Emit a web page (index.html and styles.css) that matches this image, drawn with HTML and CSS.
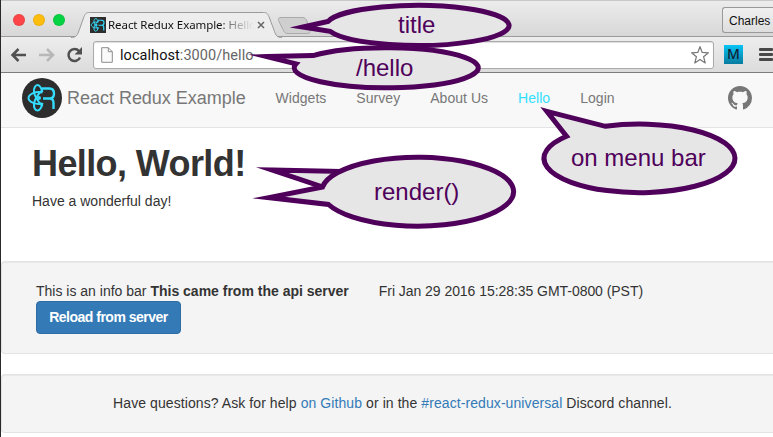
FILE: index.html
```html
<!DOCTYPE html>
<html lang="en">
<head>
<meta charset="utf-8">
<title>React Redux Example: Hello</title>
<link rel="stylesheet" href="styles.css">
</head>
<body>
<svg class="defs" width="0" height="0">
  <symbol id="mark" viewBox="0 0 40 40">
    <g fill="none" stroke="#35dcff" stroke-width="2">
      <path d="M20.500 14C19 9 17.500 7 15.500 7s-4 3-3.500 7 3.500 9 8.500 14"/>
      <path d="M20.500 14.500C13 13 6.500 16.500 6.500 20s6.500 7 14 5.500"/>
      <path d="M20.500 12C15 17 12.500 22 12 26s1.500 6.500 3.500 6.500 4-3 5-7.500"/>
      <path d="M20 10.500h7.500q4.500 0 4.500 5t-4.500 5H21M27.500 20.500q4 0 4 4.500v6" stroke-width="2.400"/>
    </g>
    <circle cx="17" cy="20" r="2" fill="#35dcff"/>
  </symbol>
</svg>
<div class="window">
  <div class="tabstrip">
    <div class="lights"><i class="red"></i><i class="amber"></i><i class="green"></i></div>
    <svg class="tab-shape" width="240" height="26" viewBox="0 0 240 26">
      <path d="M0 25.500c5 0 6-2 7.500-5.500L12.500 6c1.500-4 2.500-5.500 6-5.500h174c3.500 0 4.500 1.500 6 5.500l5 13.500c1.500 4 2.500 6 7.500 6" fill="#ededed" stroke="#9b9b9b"/>
      <path d="M210 5.500h21c3 0 4 1.500 5 4l3 8c1 3 0 4-3 4h-19c-3 0-4-1.500-5-4l-4-8c-1-3-1-4 2-4z" fill="#cfcfcf" stroke="#aaa"/>
    </svg>
    <div class="tab">
      <svg class="favicon" viewBox="0 0 40 40"><path d="M0 0h40v40H0z" fill="#2d2d2d"/><use href="#mark" transform="translate(-5 -5) scale(1.250)"/></svg>
      <span class="tab-title">React Redux Example: Hello</span>
      <svg class="close" width="8" height="8" viewBox="0 0 8 8"><path d="M1 1l6 6M7 1L1 7" stroke="#666" stroke-width="1.500"/></svg>
    </div>
    <div class="profile">Charles</div>
  </div>
  <div class="toolbar">
    <svg class="tools" width="84" height="24" viewBox="0 0 84 24" fill="none" stroke-width="2.500">
      <path d="M25 12H12M17.500 6l-6 6 6 6" stroke="#505050"/>
      <path d="M38 12h13M46 6l6 6-6 6" stroke="#b8b8b8"/>
      <path d="M78 8A6 6 0 1 0 79 14.500" stroke="#505050"/>
      <path d="M81 4v7.500h-7.500z" fill="#505050"/>
    </svg>
    <div class="url">
      <svg width="12" height="16" viewBox="0 0 12 16"><path d="M.7.700h6.600l4 4v10.600H.7zM7.300.700v4h4" fill="#fafafa" stroke="#8c8c8c"/></svg>
      <span class="address">localhost<span>:3000/hello</span></span>
      <svg class="star" width="20" height="20" viewBox="0 0 18 18"><path d="M9 1.500l2 5.200 5.600.3-4.400 3.500 1.500 5.600L9 13l-4.700 3.100 1.500-5.600L1.400 7 7 6.700z" fill="#fff" stroke="#777" stroke-width="1.100" stroke-linejoin="round"/></svg>
    </div>
    <div class="ext">M</div>
    <div class="menu"><i></i><i></i><i></i></div>
  </div>
  <nav class="navbar">
    <svg class="logo" width="40" height="40" viewBox="0 0 40 40"><circle cx="20" cy="20" r="20" fill="#2d2d2d"/><use href="#mark"/></svg>
    <span class="brand">React Redux Example</span>
    <div class="links">
      <a>Widgets</a><a>Survey</a><a>About Us</a><a class="active">Hello</a><a>Login</a>
    </div>
    <svg class="github" width="24" height="24" viewBox="0 0 16 16"><path fill="#777" d="M8 0C3.580 0 0 3.580 0 8c0 3.540 2.290 6.530 5.470 7.590.4.070.55-.17.55-.38 0-.19-.01-.82-.01-1.490-2.010.37-2.530-.49-2.690-.94-.09-.23-.48-.94-.82-1.130-.28-.15-.68-.52-.01-.53.63-.01 1.080.58 1.230.82.72 1.210 1.870.87 2.330.66.07-.52.28-.87.51-1.070-1.780-.2-3.640-.89-3.640-3.950 0-.87.31-1.590.82-2.150-.08-.2-.36-1.020.08-2.120 0 0 .67-.21 2.200.82.64-.18 1.320-.27 2-.27s1.360.09 2 .27c1.530-1.040 2.200-.82 2.200-.82.44 1.100.16 1.920.08 2.120.51.56.82 1.270.82 2.150 0 3.070-1.870 3.750-3.650 3.950.29.25.54.73.54 1.480 0 1.070-.01 1.930-.01 2.200 0 .21.15.46.55.38A8.010 8.010 0 0 0 16 8c0-4.420-3.580-8-8-8z"/></svg>
  </nav>
  <main class="hero">
    <h1>Hello, World!</h1>
    <p>Have a wonderful day!</p>
  </main>
  <section class="well info">
    <div class="info-line"><span>This is an info bar <strong>This came from the api server</strong></span><span class="date">Fri Jan 29 2016 15:28:35 GMT-0800 (PST)</span></div>
    <button class="reload">Reload from server</button>
  </section>
  <footer class="well foot">Have questions? Ask for help <a>on Github</a> or in the <a>#react-redux-universal</a> Discord channel.</footer>
</div>
<svg class="callouts" width="773" height="437" viewBox="0 0 773 437">
  <g fill="#e6e6e6" stroke="#4f005a" stroke-width="5" stroke-miterlimit="20">
    <path d="M303 27L328 21.400A91.500 20 0 1 1 330 31.300Z"/>
    <path d="M267 56.600L313 55.600A92 20 0 1 1 296 63.800Z"/>
    <path d="M272.300 170.100L345 171.500L323 187Z"/>
    <path d="M268.700 197.600L322.500 187A96 34.500 0 1 1 328.500 204.500Z"/>
    <path d="M546.800 111.300L605.300 126.300A95.500 34.300 0 1 1 566.500 136.200Z"/>
  </g>
  <g class="callout-text">
    <text x="398" y="33">title</text>
    <text x="356" y="76">/hello</text>
    <text x="374" y="200">render()</text>
    <text x="571" y="166">on menu bar</text>
  </g>
</svg>
</body>
</html>
```
FILE: styles.css
```css
* { box-sizing: border-box; }
body {
  margin: 0;
  height: 437px;
  overflow: hidden;
  position: relative;
  background: #fff;
  color: #333;
  font: 14px/20px "Liberation Sans", Arial, sans-serif;
}
.defs { position: absolute; }
.window { height: 437px; border-left: 1px solid #29292c; }
.tabstrip {
  height: 37px;
  display: flex;
  position: relative;
  background: linear-gradient(#ececec, #d7d7d7);
  border-top: 1px solid #c8c8c8;
  border-bottom: 1px solid #9b9b9b;
}
.lights { display: flex; gap: 8px; padding: 13px 0 0 12px; width: 88px; flex: none; }
.lights i { width: 12px; height: 12px; border-radius: 50%; border: 1px solid #0001; }
.red { background: #fc4548; }
.amber { background: #fdbd0e; }
.green { background: #06d343; }
.tab-shape { position: absolute; left: 70px; top: 11px; }
.tab { position: relative; display: flex; align-items: center; height: 24px; margin-top: 12px; width: 180px; }
.favicon { width: 16px; height: 16px; flex: none; margin-left: 1px; }
.tab-title {
  width: 148px;
  margin-left: 2px;
  overflow: hidden;
  white-space: nowrap;
  color: transparent;
  background: linear-gradient(90deg, #111 114px, #777 122px, #7770 146px) text;
  font: 11.5px/20px "Noto Sans", sans-serif;
  letter-spacing: -.07px;
}
.close { margin-left: 1px; }
.profile {
  margin: 6px 0 0 auto;
  width: 51px;
  height: 26px;
  padding-left: 6px;
  border: 1px solid #999;
  border-right: 0;
  border-radius: 3px 0 0 3px;
  background: linear-gradient(#f0f0f0, #dedede);
  color: #111;
  font-size: 12px;
  line-height: 26px;
}
.toolbar {
  height: 36px;
  display: flex;
  align-items: center;
  background: linear-gradient(#ededed, #dcdcdc);
  border-bottom: 1px solid #7c7c7c;
}
.tools { flex: none; }
.url {
  width: 621px;
  height: 28px;
  margin-left: 8px;
  padding: 0 3px 0 7px;
  display: flex;
  align-items: center;
  background: #fff;
  border: 1px solid #aaa;
  border-radius: 3px;
  box-shadow: inset 0 1px 1px #0002;
}
.address { margin-left: 7px; color: #111; font: 14.5px/20px Roboto, sans-serif; letter-spacing: .06px; position: relative; top: 1px; }
.address span { color: #666; }
.star { margin-left: auto; }
.ext {
  width: 19px;
  height: 19px;
  margin-left: 10px;
  background: linear-gradient(#08c4f5, #087ba0);
  color: #123;
  text-align: center;
  font: 500 14px/18px "Noto Sans", sans-serif;
}
.menu { width: 14px; margin-left: 16px; display: grid; gap: 2px; }
.menu i { height: 3px; border-radius: 1px; background: #484848; }
.navbar {
  height: 55px;
  display: flex;
  align-items: center;
  padding: 0 21px;
  position: relative;
  background: #f8f8f8;
  border-bottom: 1px solid #e4e4e4;
  color: #777;
}
.logo { margin-top: -4px; flex: none; }
.brand { width: 208.500px; margin: -4px 0 0 5px; font-size: 18px; white-space: nowrap; letter-spacing: -.02px; }
.links { display: flex; gap: 30px; margin-top: -4px; white-space: nowrap; letter-spacing: .04px; }
.active { color: #33e0ff; }
.github { margin: -5px 0 0 auto; }
.hero { height: 133px; padding: 16px 31px 0; }
h1 { margin: 0 0 8px; font-size: 36px; line-height: 39px; letter-spacing: -.6px; }
.hero p { margin: 0; }
.well {
  background: #f4f4f4;
  border: 1px solid #e3e3e3;
  border-right: 0;
  border-radius: 4px 0 0 4px;
  box-shadow: inset 0 1px 1px #0000000d;
}
.info { height: 93px; padding: 19px 34px; margin-bottom: 20px; }
.info-line { display: flex; gap: 30px; white-space: nowrap; }
.date { letter-spacing: -.05px; }
.reload {
  display: block;
  width: 145px;
  height: 33px;
  padding: 0 0 1px;
  background: #337ab7;
  border: 1px solid #2e6da4;
  border-radius: 4px;
  color: #fff;
  font: bold 14px/20px "Liberation Sans", Arial, sans-serif;
  letter-spacing: -.5px;
}
.foot { height: 59px; padding: 18px 0 18px 10px; text-align: center; letter-spacing: .08px; }
.foot a { color: #337ab7; }
.callouts { position: absolute; left: 0; top: 0; }
.callout-text { fill: #4f005a; font: 24px "Liberation Sans", Arial, sans-serif; }
```
